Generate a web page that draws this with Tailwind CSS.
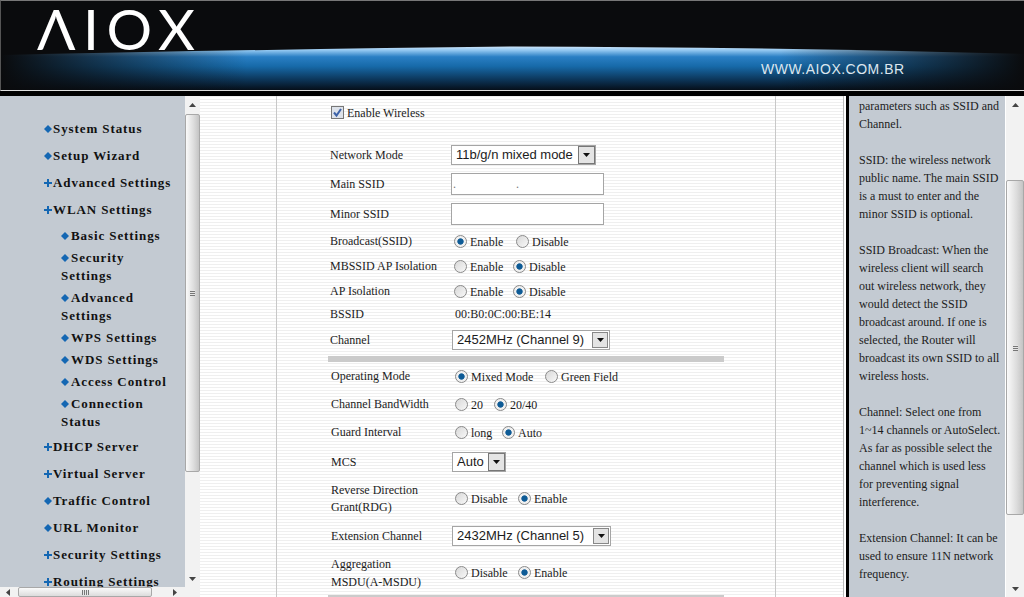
<!DOCTYPE html>
<html lang="en">
<head>
  <meta charset="UTF-8">
  <title>AIOX - Wireless Settings</title>
  <script src="https://cdn.jsdelivr.net/npm/@tailwindcss/browser@4"></script>
</head>
<body class="h-[597px] w-[1024px] overflow-hidden bg-white font-['Liberation_Serif',serif] text-[12px] text-[#1c1c1c]">
  <!-- Header -->
  <header class="relative h-[91px] overflow-hidden border-t border-l border-b border-t-[#777] border-l-[#555] border-b-[#ddd] bg-[#0a0b0d]">
    <svg class="absolute left-0 top-0" width="1024" height="91" viewBox="0 0 1024 91">
      <defs>
        <linearGradient id="sky" gradientUnits="userSpaceOnUse" x1="0" y1="45" x2="0" y2="90">
          <stop offset="0" stop-color="#d4e9fb"/>
          <stop offset="0.1" stop-color="#8fc5ef"/>
          <stop offset="0.24" stop-color="#2a7fc4"/>
          <stop offset="0.45" stop-color="#176aa9"/>
          <stop offset="0.75" stop-color="#0c3558"/>
          <stop offset="1" stop-color="#050b13"/>
        </linearGradient>
        <linearGradient id="fade" x1="0" y1="0" x2="1" y2="0">
          <stop offset="0" stop-color="#0a0b0d" stop-opacity="1"/>
          <stop offset="0.24" stop-color="#0a0b0d" stop-opacity="0"/>
          <stop offset="0.76" stop-color="#0a0b0d" stop-opacity="0"/>
          <stop offset="1" stop-color="#0a0b0d" stop-opacity="1"/>
        </linearGradient>
      </defs>
      <path d="M0 54 Q 280 48 512 45.500 Q 760 46 1024 53 L1024 91 L0 91 Z" fill="url(#sky)"/>
      <rect x="0" y="46" width="1024" height="45" fill="url(#fade)"/>
    </svg>
    <div class="relative flex h-full flex-col">
      <div class="ml-[36px] mt-[1px] h-[52px] font-['Lato',sans-serif] text-[57px] leading-[52px] tracking-[7.5px] text-white">ΛIOX</div>
      <div class="ml-[760px] mt-[7px] font-['Liberation_Sans',sans-serif] text-[14px] leading-[16px] tracking-[0.5px] text-[#dce6ee]">WWW.AIOX.COM.BR</div>
    </div>
  </header>
  <div class="h-[5px] bg-black"></div>

  <div class="flex h-[501px]">
    <!-- Left menu frame -->
    <div class="flex w-[200px] shrink-0 flex-col">
      <div class="flex h-[491px]">
        <nav class="h-full w-[185px] overflow-hidden bg-[#c3cad2] pl-[44px] pt-[24px] text-[13px] font-bold leading-[18px] tracking-[0.9px] text-[#111]">
          <div class="flex h-[18px] items-center"><svg class="mr-[1px] shrink-0" width="8" height="8" viewBox="0 0 8 8"><path d="M4 0 L8 4 L4 8 L0 4 Z" fill="#1467b3"/></svg>System Status</div>
          <div class="mt-[9px] flex h-[18px] items-center"><svg class="mr-[1px] shrink-0" width="8" height="8" viewBox="0 0 8 8"><path d="M4 0 L8 4 L4 8 L0 4 Z" fill="#1467b3"/></svg>Setup Wizard</div>
          <div class="mt-[9px] flex h-[18px] items-center"><svg class="mr-[1px] shrink-0" width="8" height="8" viewBox="0 0 8 8"><path d="M3 0h2v3h3v2H5v3H3V5H0V3h3z" fill="#1467b3"/></svg>Advanced Settings</div>
          <div class="mt-[9px] flex h-[18px] items-center"><svg class="mr-[1px] shrink-0" width="8" height="8" viewBox="0 0 8 8"><path d="M3 0h2v3h3v2H5v3H3V5H0V3h3z" fill="#1467b3"/></svg>WLAN Settings</div>
          <div class="ml-[17px]">
            <div class="mt-[8px] flex h-[18px] items-center"><svg class="mr-[2px] shrink-0" width="8" height="8" viewBox="0 0 8 8"><path d="M4 0 L8 4 L4 8 L0 4 Z" fill="#1467b3"/></svg>Basic Settings</div>
            <div class="mt-[4px]"><svg class="mr-[2px] inline align-baseline" width="8" height="8" viewBox="0 0 8 8"><path d="M4 0 L8 4 L4 8 L0 4 Z" fill="#1467b3"/></svg>Security<br>Settings</div>
            <div class="mt-[4px]"><svg class="mr-[2px] inline align-baseline" width="8" height="8" viewBox="0 0 8 8"><path d="M4 0 L8 4 L4 8 L0 4 Z" fill="#1467b3"/></svg>Advanced<br>Settings</div>
            <div class="mt-[4px] flex h-[18px] items-center"><svg class="mr-[2px] shrink-0" width="8" height="8" viewBox="0 0 8 8"><path d="M4 0 L8 4 L4 8 L0 4 Z" fill="#1467b3"/></svg>WPS Settings</div>
            <div class="mt-[4px] flex h-[18px] items-center"><svg class="mr-[2px] shrink-0" width="8" height="8" viewBox="0 0 8 8"><path d="M4 0 L8 4 L4 8 L0 4 Z" fill="#1467b3"/></svg>WDS Settings</div>
            <div class="mt-[4px] flex h-[18px] items-center"><svg class="mr-[2px] shrink-0" width="8" height="8" viewBox="0 0 8 8"><path d="M4 0 L8 4 L4 8 L0 4 Z" fill="#1467b3"/></svg>Access Control</div>
            <div class="mt-[4px]"><svg class="mr-[2px] inline align-baseline" width="8" height="8" viewBox="0 0 8 8"><path d="M4 0 L8 4 L4 8 L0 4 Z" fill="#1467b3"/></svg>Connection<br>Status</div>
          </div>
          <div class="mt-[7px] flex h-[18px] items-center"><svg class="mr-[1px] shrink-0" width="8" height="8" viewBox="0 0 8 8"><path d="M3 0h2v3h3v2H5v3H3V5H0V3h3z" fill="#1467b3"/></svg>DHCP Server</div>
          <div class="mt-[9px] flex h-[18px] items-center"><svg class="mr-[1px] shrink-0" width="8" height="8" viewBox="0 0 8 8"><path d="M3 0h2v3h3v2H5v3H3V5H0V3h3z" fill="#1467b3"/></svg>Virtual Server</div>
          <div class="mt-[9px] flex h-[18px] items-center"><svg class="mr-[1px] shrink-0" width="8" height="8" viewBox="0 0 8 8"><path d="M4 0 L8 4 L4 8 L0 4 Z" fill="#1467b3"/></svg>Traffic Control</div>
          <div class="mt-[9px] flex h-[18px] items-center"><svg class="mr-[1px] shrink-0" width="8" height="8" viewBox="0 0 8 8"><path d="M4 0 L8 4 L4 8 L0 4 Z" fill="#1467b3"/></svg>URL Monitor</div>
          <div class="mt-[9px] flex h-[18px] items-center"><svg class="mr-[1px] shrink-0" width="8" height="8" viewBox="0 0 8 8"><path d="M3 0h2v3h3v2H5v3H3V5H0V3h3z" fill="#1467b3"/></svg>Security Settings</div>
          <div class="mt-[9px] flex h-[18px] items-center"><svg class="mr-[1px] shrink-0" width="8" height="8" viewBox="0 0 8 8"><path d="M3 0h2v3h3v2H5v3H3V5H0V3h3z" fill="#1467b3"/></svg>Routing Settings</div>
        </nav>
        <!-- Left vertical scrollbar -->
        <div class="flex h-full w-[15px] flex-col items-center bg-[#f2f2f2]">
          <svg class="mt-[7px]" width="7" height="4" viewBox="0 0 7 4"><path d="M3.500 0 L7 4 H0 Z" fill="#444"/></svg>
          <div class="mt-[7px] flex h-[358px] w-[15px] items-center justify-center rounded-[2px] border border-[#a8a8a8] bg-[linear-gradient(90deg,#fafafa,#dcdcdc_60%,#c4c4c4)]">
            <div class="h-[6px] w-[5px] bg-[repeating-linear-gradient(0deg,#777_0,#777_1px,#e6e6e6_1px,#e6e6e6_2px)]"></div>
          </div>
          <svg class="mt-[105px]" width="7" height="4" viewBox="0 0 7 4"><path d="M0 0 H7 L3.500 4 Z" fill="#444"/></svg>
        </div>
      </div>
      <!-- Left horizontal scrollbar -->
      <div class="flex h-[10px] items-center bg-[#f2f2f2]">
        <svg class="ml-[6px]" width="4" height="7" viewBox="0 0 4 7"><path d="M4 0 V7 L0 3.500 Z" fill="#444"/></svg>
        <div class="ml-[8px] flex h-[10px] w-[134px] items-center justify-center rounded-[2px] border border-[#a8a8a8] bg-[linear-gradient(180deg,#fafafa,#dcdcdc)]">
          <div class="h-[5px] w-[7px] bg-[repeating-linear-gradient(90deg,#777_0,#777_1px,#e6e6e6_1px,#e6e6e6_2px)]"></div>
        </div>
        <svg class="ml-[21px]" width="4" height="7" viewBox="0 0 4 7"><path d="M0 0 L4 3.500 L0 7 Z" fill="#444"/></svg>
      </div>
    </div>

    <!-- Center form frame -->
    <main class="h-full w-[646px] shrink-0 bg-white pr-[2px]">
      <div class="h-full overflow-hidden border-r border-[#bbb] bg-[repeating-linear-gradient(180deg,#efefef_0,#efefef_1px,#ffffff_1px,#ffffff_3px)] pl-[76px]">
        <div class="h-full w-[500px] overflow-hidden border-x border-[#c8c8c8] pl-[53px] pt-[8px]">
          <div class="flex h-[16px] items-center">
            <svg class="ml-[1px]" width="13" height="13" viewBox="0 0 13 13"><rect x="0.500" y="0.500" width="12" height="12" fill="#dde2ea" stroke="#777"/><path d="M3 6.500 L5.500 9.500 L10 3" fill="none" stroke="#3d62a8" stroke-width="2"/></svg>
            <span class="ml-[3px] translate-y-[1px]">Enable Wireless</span>
          </div>

          <div class="mt-[24px] flex h-[22px] items-center">
            <div class="w-[121px]">Network Mode</div>
            <div class="flex h-[20px] w-[145px] items-center justify-between whitespace-nowrap border border-[#a5a5a5] bg-white pl-[4px] font-['Liberation_Sans',sans-serif] text-[13px]">
              <span>11b/g/n mixed mode</span>
              <span class="flex h-[18px] w-[17px] items-center justify-center border border-[#777] bg-[#e4e4e4]"><svg width="7" height="4" viewBox="0 0 7 4"><path d="M0 0 H7 L3.500 4 Z" fill="#111"/></svg></span>
            </div>
          </div>
          <div class="mt-[7px] flex h-[22px] items-center">
            <div class="w-[121px]">Main SSID</div>
            <input type="text" value=".                    ." class="h-[22px] w-[153px] border border-[#a5a5a5] bg-white px-[1px] text-[12px] text-[#777]">
          </div>
          <div class="mt-[8px] flex h-[22px] items-center">
            <div class="w-[121px]">Minor SSID</div>
            <input type="text" class="h-[22px] w-[153px] border border-[#a5a5a5] bg-white">
          </div>

          <div class="mt-[8px] flex h-[16px] items-center">
            <div class="w-[124px]">Broadcast(SSID)</div>
            <input type="radio" name="broadcast" checked class="h-[13px] w-[13px] appearance-none rounded-full border border-[#8a8a8a] bg-[linear-gradient(135deg,#d8d8d8,#f8f8f8)] checked:bg-[radial-gradient(circle_closest-side,#0e5b96_0,#0e5b96_50%,#f0f0f0_65%)]">
            <span class="ml-[3px] w-[46px] translate-y-[1px]">Enable</span>
            <input type="radio" name="broadcast" class="h-[13px] w-[13px] appearance-none rounded-full border border-[#8a8a8a] bg-[linear-gradient(135deg,#d8d8d8,#f8f8f8)]">
            <span class="ml-[3px] translate-y-[1px]">Disable</span>
          </div>
          <div class="mt-[9px] flex h-[16px] items-center">
            <div class="w-[124px]">MBSSID AP Isolation</div>
            <input type="radio" name="mbssid" class="h-[13px] w-[13px] appearance-none rounded-full border border-[#8a8a8a] bg-[linear-gradient(135deg,#d8d8d8,#f8f8f8)]">
            <span class="ml-[3px] w-[43px] translate-y-[1px]">Enable</span>
            <input type="radio" name="mbssid" checked class="h-[13px] w-[13px] appearance-none rounded-full border border-[#8a8a8a] bg-[linear-gradient(135deg,#d8d8d8,#f8f8f8)] checked:bg-[radial-gradient(circle_closest-side,#0e5b96_0,#0e5b96_50%,#f0f0f0_65%)]">
            <span class="ml-[3px] translate-y-[1px]">Disable</span>
          </div>
          <div class="mt-[9px] flex h-[16px] items-center">
            <div class="w-[124px]">AP Isolation</div>
            <input type="radio" name="ap" class="h-[13px] w-[13px] appearance-none rounded-full border border-[#8a8a8a] bg-[linear-gradient(135deg,#d8d8d8,#f8f8f8)]">
            <span class="ml-[3px] w-[43px] translate-y-[1px]">Enable</span>
            <input type="radio" name="ap" checked class="h-[13px] w-[13px] appearance-none rounded-full border border-[#8a8a8a] bg-[linear-gradient(135deg,#d8d8d8,#f8f8f8)] checked:bg-[radial-gradient(circle_closest-side,#0e5b96_0,#0e5b96_50%,#f0f0f0_65%)]">
            <span class="ml-[3px] translate-y-[1px]">Disable</span>
          </div>
          <div class="mt-[7px] flex h-[16px] items-center">
            <div class="w-[125px]">BSSID</div>
            <div>00:B0:0C:00:BE:14</div>
          </div>
          <div class="mt-[7px] flex h-[22px] items-center">
            <div class="w-[122px]">Channel</div>
            <div class="flex h-[20px] w-[158px] items-center justify-between whitespace-nowrap border border-[#a5a5a5] bg-white pl-[4px] font-['Liberation_Sans',sans-serif] text-[13px]">
              <span>2452MHz (Channel 9)</span>
              <span class="mr-[1px] flex h-[16px] w-[16px] items-center justify-center border border-[#888] bg-[#e4e4e4]"><svg width="7" height="4" viewBox="0 0 7 4"><path d="M0 0 H7 L3.500 4 Z" fill="#111"/></svg></span>
            </div>
          </div>

          <div class="-ml-[2px] mt-[5px] h-[6px] w-[396px] bg-[#cbcbcb]"></div>

          <div class="ml-[1px] mt-[6px] flex h-[16px] items-center">
            <div class="w-[124px]">Operating Mode</div>
            <input type="radio" name="opmode" checked class="h-[13px] w-[13px] appearance-none rounded-full border border-[#8a8a8a] bg-[linear-gradient(135deg,#d8d8d8,#f8f8f8)] checked:bg-[radial-gradient(circle_closest-side,#0e5b96_0,#0e5b96_50%,#f0f0f0_65%)]">
            <span class="ml-[3px] w-[74px] translate-y-[1px]">Mixed Mode</span>
            <input type="radio" name="opmode" class="h-[13px] w-[13px] appearance-none rounded-full border border-[#8a8a8a] bg-[linear-gradient(135deg,#d8d8d8,#f8f8f8)]">
            <span class="ml-[3px] translate-y-[1px]">Green Field</span>
          </div>
          <div class="ml-[1px] mt-[12px] flex h-[16px] items-center">
            <div class="w-[124px]">Channel BandWidth</div>
            <input type="radio" name="bw" class="h-[13px] w-[13px] appearance-none rounded-full border border-[#8a8a8a] bg-[linear-gradient(135deg,#d8d8d8,#f8f8f8)]">
            <span class="ml-[3px] w-[23px] translate-y-[1px]">20</span>
            <input type="radio" name="bw" checked class="h-[13px] w-[13px] appearance-none rounded-full border border-[#8a8a8a] bg-[linear-gradient(135deg,#d8d8d8,#f8f8f8)] checked:bg-[radial-gradient(circle_closest-side,#0e5b96_0,#0e5b96_50%,#f0f0f0_65%)]">
            <span class="ml-[3px] translate-y-[1px]">20/40</span>
          </div>
          <div class="ml-[1px] mt-[12px] flex h-[16px] items-center">
            <div class="w-[124px]">Guard Interval</div>
            <input type="radio" name="gi" class="h-[13px] w-[13px] appearance-none rounded-full border border-[#8a8a8a] bg-[linear-gradient(135deg,#d8d8d8,#f8f8f8)]">
            <span class="ml-[3px] w-[31px] translate-y-[1px]">long</span>
            <input type="radio" name="gi" checked class="h-[13px] w-[13px] appearance-none rounded-full border border-[#8a8a8a] bg-[linear-gradient(135deg,#d8d8d8,#f8f8f8)] checked:bg-[radial-gradient(circle_closest-side,#0e5b96_0,#0e5b96_50%,#f0f0f0_65%)]">
            <span class="ml-[3px] translate-y-[1px]">Auto</span>
          </div>
          <div class="ml-[1px] mt-[11px] flex h-[22px] items-center">
            <div class="w-[121px]">MCS</div>
            <div class="flex h-[20px] w-[54px] items-center justify-between whitespace-nowrap border border-[#a5a5a5] bg-white pl-[4px] font-['Liberation_Sans',sans-serif] text-[13px]">
              <span>Auto</span>
              <span class="flex h-[18px] w-[17px] items-center justify-center border border-[#777] bg-[#e4e4e4]"><svg width="7" height="4" viewBox="0 0 7 4"><path d="M0 0 H7 L3.500 4 Z" fill="#111"/></svg></span>
            </div>
          </div>
          <div class="ml-[1px] mt-[7px] flex h-[36px] items-center">
            <div class="w-[124px] translate-y-[1px] leading-[17px]">Reverse Direction<br>Grant(RDG)</div>
            <input type="radio" name="rdg" class="h-[13px] w-[13px] appearance-none rounded-full border border-[#8a8a8a] bg-[linear-gradient(135deg,#d8d8d8,#f8f8f8)]">
            <span class="ml-[3px] w-[47px] translate-y-[1px]">Disable</span>
            <input type="radio" name="rdg" checked class="h-[13px] w-[13px] appearance-none rounded-full border border-[#8a8a8a] bg-[linear-gradient(135deg,#d8d8d8,#f8f8f8)] checked:bg-[radial-gradient(circle_closest-side,#0e5b96_0,#0e5b96_50%,#f0f0f0_65%)]">
            <span class="ml-[3px] translate-y-[1px]">Enable</span>
          </div>
          <div class="ml-[1px] mt-[9px] flex h-[22px] items-center">
            <div class="w-[121px]">Extension Channel</div>
            <div class="flex h-[20px] w-[159px] items-center justify-between whitespace-nowrap border border-[#a5a5a5] bg-white pl-[4px] font-['Liberation_Sans',sans-serif] text-[13px]">
              <span>2432MHz (Channel 5)</span>
              <span class="mr-[1px] flex h-[16px] w-[16px] items-center justify-center border border-[#888] bg-[#e4e4e4]"><svg width="7" height="4" viewBox="0 0 7 4"><path d="M0 0 H7 L3.500 4 Z" fill="#111"/></svg></span>
            </div>
          </div>
          <div class="ml-[1px] mt-[7px] flex h-[36px] items-center">
            <div class="w-[124px] translate-y-[1px] leading-[18px]">Aggregation<br>MSDU(A-MSDU)</div>
            <input type="radio" name="amsdu" class="h-[13px] w-[13px] appearance-none rounded-full border border-[#8a8a8a] bg-[linear-gradient(135deg,#d8d8d8,#f8f8f8)]">
            <span class="ml-[3px] w-[47px] translate-y-[1px]">Disable</span>
            <input type="radio" name="amsdu" checked class="h-[13px] w-[13px] appearance-none rounded-full border border-[#8a8a8a] bg-[linear-gradient(135deg,#d8d8d8,#f8f8f8)] checked:bg-[radial-gradient(circle_closest-side,#0e5b96_0,#0e5b96_50%,#f0f0f0_65%)]">
            <span class="ml-[3px] translate-y-[1px]">Enable</span>
          </div>
          <div class="-ml-[2px] mt-[5px] h-[2px] w-[396px] bg-[#cbcbcb]"></div>
        </div>
      </div>
    </main>

    <div class="w-[3px] shrink-0 bg-black"></div>

    <!-- Right help frame -->
    <aside class="flex h-full grow">
      <div class="h-full w-[157px] overflow-hidden border-r border-white bg-[#c3cad2] pl-[10px] pt-[1px] leading-[18px] text-[#1c1c1c]">
        parameters such as SSID and<br>Channel.<br><br>
        SSID: the wireless network<br>public name. The main SSID<br>is a must to enter and the<br>minor SSID is optional.<br><br>
        SSID Broadcast: When the<br>wireless client will search<br>out wireless network, they<br>would detect the SSID<br>broadcast around. If one is<br>selected, the Router will<br>broadcast its own SSID to all<br>wireless hosts.<br><br>
        Channel: Select one from<br>1~14 channels or AutoSelect.<br>As far as possible select the<br>channel which is used less<br>for preventing signal<br>interference.<br><br>
        Extension Channel: It can be<br>used to ensure 11N network<br>frequency.
      </div>
      <div class="flex h-full grow flex-col items-center bg-[#f2f2f2]">
        <svg class="mt-[7px]" width="7" height="4" viewBox="0 0 7 4"><path d="M3.500 0 L7 4 H0 Z" fill="#444"/></svg>
        <div class="mt-[73px] flex h-[335px] w-full items-center justify-center rounded-[2px] border border-[#a8a8a8] bg-[linear-gradient(90deg,#fafafa,#dcdcdc_60%,#c4c4c4)]">
          <div class="h-[6px] w-[5px] bg-[repeating-linear-gradient(0deg,#777_0,#777_1px,#e6e6e6_1px,#e6e6e6_2px)]"></div>
        </div>
        <svg class="mt-[72px]" width="7" height="4" viewBox="0 0 7 4"><path d="M0 0 H7 L3.500 4 Z" fill="#444"/></svg>
      </div>
    </aside>
  </div>
</body>
</html>
